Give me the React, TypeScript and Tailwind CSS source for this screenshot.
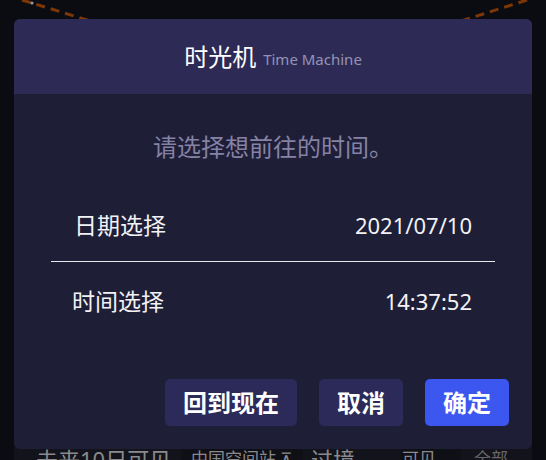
import React from 'react';

const pickers = [
  { label: '日期选择', value: '2021/07/10' },
  { label: '时间选择', value: '14:37:52' },
];

export default function App() {
  return (
    <div className="relative h-[460px] w-full overflow-hidden bg-[#0b0c12] font-['Noto_Sans','Noto_Sans_CJK_SC',sans-serif]">
      {/* orbit trails drawn on the page behind the modal */}
      <svg className="absolute inset-0" width="546" height="460" viewBox="0 0 546 460">
        <line x1="22" y1="0" x2="110" y2="27" stroke="#7d3606" strokeWidth="3" strokeDasharray="9 6" />
        <circle cx="32" cy="3" r="1.6" fill="#9a9a9a" />
        <line x1="527" y1="0" x2="430" y2="31" stroke="#7d3606" strokeWidth="3" strokeDasharray="9 6" />
      </svg>

      {/* time machine dialog */}
      <div className="relative z-10 mx-[14px] mt-[19px] overflow-hidden rounded-[6px] bg-[#1f1e37]">
        <div className="flex h-[75px] items-center justify-center bg-[#2d2b56]">
          <span className="text-[24px] leading-[32px] text-white">时光机</span>
          <span className="ml-[7px] mt-[5px] text-[15px] leading-[20px] text-[#9593b4]">Time Machine</span>
        </div>

        <p className="pt-[37px] text-center text-[24px] leading-[32px] text-[#8582a6]">请选择想前往的时间。</p>

        <div className="mx-[37px] mt-[26px]">
          {pickers.map((p, i) => (
            <div
              key={p.label}
              className={
                i === 0
                  ? 'flex h-[73px] items-center justify-between border-b border-[#e8e8ef] pl-[23px] pr-[23px]'
                  : 'flex h-[78px] items-center justify-between pl-[21px] pr-[23px]'
              }
            >
              <span className="text-[23px] leading-[30px] text-[#f2f2f5]">{p.label}</span>
              <span className="text-[22px] leading-[30px] text-[#f2f2f5]">{p.value}</span>
            </div>
          ))}
        </div>

        <div className="mt-[39px] flex justify-end gap-[22px] pb-[23px] pr-[23px]">
          <button className="h-[47px] rounded-[5px] bg-[#2b2a58] px-[18px] text-[24px] font-bold text-white">回到现在</button>
          <button className="h-[47px] rounded-[5px] bg-[#2b2a58] px-[18px] text-[24px] font-bold text-white">取消</button>
          <button className="h-[47px] rounded-[5px] bg-[#3c56f0] px-[18px] text-[24px] font-bold text-white">确定</button>
        </div>
      </div>

      {/* pass list row peeking out under the modal */}
      <div className="relative -mt-[15px] mx-[14px] flex h-[40px] items-start bg-[#13131b] pt-[10px] text-[#8a8a8e]">
        <span className="ml-[22px] w-[145px] text-[22px] leading-[30px]">未来10日可见</span>
        <span className="w-[122px] bg-[#0f0f16] pl-[10px] text-[17px] leading-[30px]">中国空间站 ⊼</span>
        <span className="ml-[8px] w-[90px] text-[22px] leading-[30px]">过境</span>
        <span className="w-[60px] bg-[#0f0f16] pl-[1px] text-[17px] leading-[30px]">可见</span>
        <span className="ml-[13px] text-[17px] leading-[30px] text-[#66666c]">全部</span>
      </div>
    </div>
  );
}
